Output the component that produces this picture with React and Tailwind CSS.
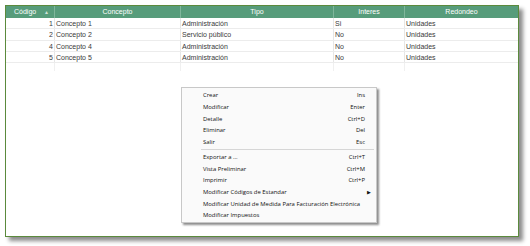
const COLS = [
  { key: 'codigo', label: 'Código', w: 'w-[49px]' },
  { key: 'concepto', label: 'Concepto', w: 'w-[126px]' },
  { key: 'tipo', label: 'Tipo', w: 'w-[153px]' },
  { key: 'interes', label: 'Interes', w: 'w-[71px]' },
  { key: 'redondeo', label: 'Redondeo', w: 'flex-1' },
];

const ROWS = [
  { codigo: '1', concepto: 'Concepto 1', tipo: 'Administración', interes: 'Si', redondeo: 'Unidades' },
  { codigo: '2', concepto: 'Concepto 2', tipo: 'Servicio público', interes: 'No', redondeo: 'Unidades' },
  { codigo: '4', concepto: 'Concepto 4', tipo: 'Administración', interes: 'No', redondeo: 'Unidades' },
  { codigo: '5', concepto: 'Concepto 5', tipo: 'Administración', interes: 'No', redondeo: 'Unidades' },
];

const MENU = [
  [
    { label: 'Crear', key: 'Ins' },
    { label: 'Modificar', key: 'Enter' },
    { label: 'Detalle', key: 'Ctrl+D' },
    { label: 'Eliminar', key: 'Del' },
    { label: 'Salir', key: 'Esc' },
  ],
  [
    { label: 'Exportar a ...', key: 'Ctrl+T' },
    { label: 'Vista Preliminar', key: 'Ctrl+M' },
    { label: 'Imprimir', key: 'Ctrl+P' },
    { label: 'Modificar Códigos de Estandar', sub: true },
    { label: 'Modificar Unidad de Medida Para Facturación Electrónica' },
    { label: 'Modificar Impuestos' },
  ],
];

function MenuItem({ item }) {
  return (
    <div className="flex items-center h-[11.7px] pl-[21px] pr-[11px]">
      <span className="flex-1 whitespace-nowrap">{item.label}</span>
      {item.key && <span>{item.key}</span>}
      {item.sub && <span className="text-[5px] mr-[-6px]">▶</span>}
    </div>
  );
}

export default function App() {
  return (
    <div className="relative w-[530px] h-[246px] bg-white font-['Liberation_Sans',Arial,sans-serif] overflow-hidden">
      <div className="ml-[5px] mt-[5px] w-[514px] h-[232px] border border-[#5b8a3c] bg-white shadow-[4px_4px_4px_rgba(0,0,0,0.45)]">
        <div className="flex h-[12px] bg-[#579c7b] text-white text-[7px] leading-[12px]">
          {COLS.map((c, i) => (
            <div
              key={c.key}
              className={`${c.w} ${i < COLS.length - 1 ? 'border-r border-[#7fb69b]' : ''} ${i === 0 ? 'flex justify-between pl-[8px] pr-[5px]' : 'text-center'}`}
            >
              {c.label}
              {i === 0 && <span className="text-[5px] text-[#cfe3d8]">▲</span>}
            </div>
          ))}
        </div>
        {ROWS.map((r) => (
          <div key={r.codigo} className="flex h-[11.3px] border-b border-[#ececec] text-[7px] leading-[11px] text-[#3a3a3a]">
            <div className="w-[49px] border-r border-[#e6e6e6] text-right pr-[1px]">{r.codigo}</div>
            <div className="w-[126px] border-r border-[#e6e6e6] pl-[1px]">{r.concepto}</div>
            <div className="w-[153px] border-r border-[#e6e6e6] pl-[1px]">{r.tipo}</div>
            <div className="w-[71px] border-r border-[#e6e6e6] pl-[1px]">{r.interes}</div>
            <div className="flex-1 pl-[1px]">{r.redondeo}</div>
          </div>
        ))}
        <div className="flex h-[8px]">
          <div className="w-[49px] border-r border-[#f0f0f0]" />
          <div className="w-[126px] border-r border-[#f0f0f0]" />
          <div className="w-[153px] border-r border-[#f0f0f0]" />
          <div className="w-[71px] border-r border-[#f0f0f0]" />
        </div>
      </div>

      <div className="absolute left-[181px] top-[87px] w-[196px] h-[136px] bg-[#fafafa] border border-[#c8c8c8] shadow-[2px_2px_2px_rgba(0,0,0,0.45)] py-[2px] text-[5.9px] font-medium text-[#111] font-['Open_Sans',sans-serif]">
        {MENU[0].map((it) => (
          <MenuItem key={it.label} item={it} />
        ))}
        <div className="ml-[19px] mr-[2px] my-[1px] h-px bg-[#d6d6d6]" />
        {MENU[1].map((it) => (
          <MenuItem key={it.label} item={it} />
        ))}
      </div>
    </div>
  );
}
